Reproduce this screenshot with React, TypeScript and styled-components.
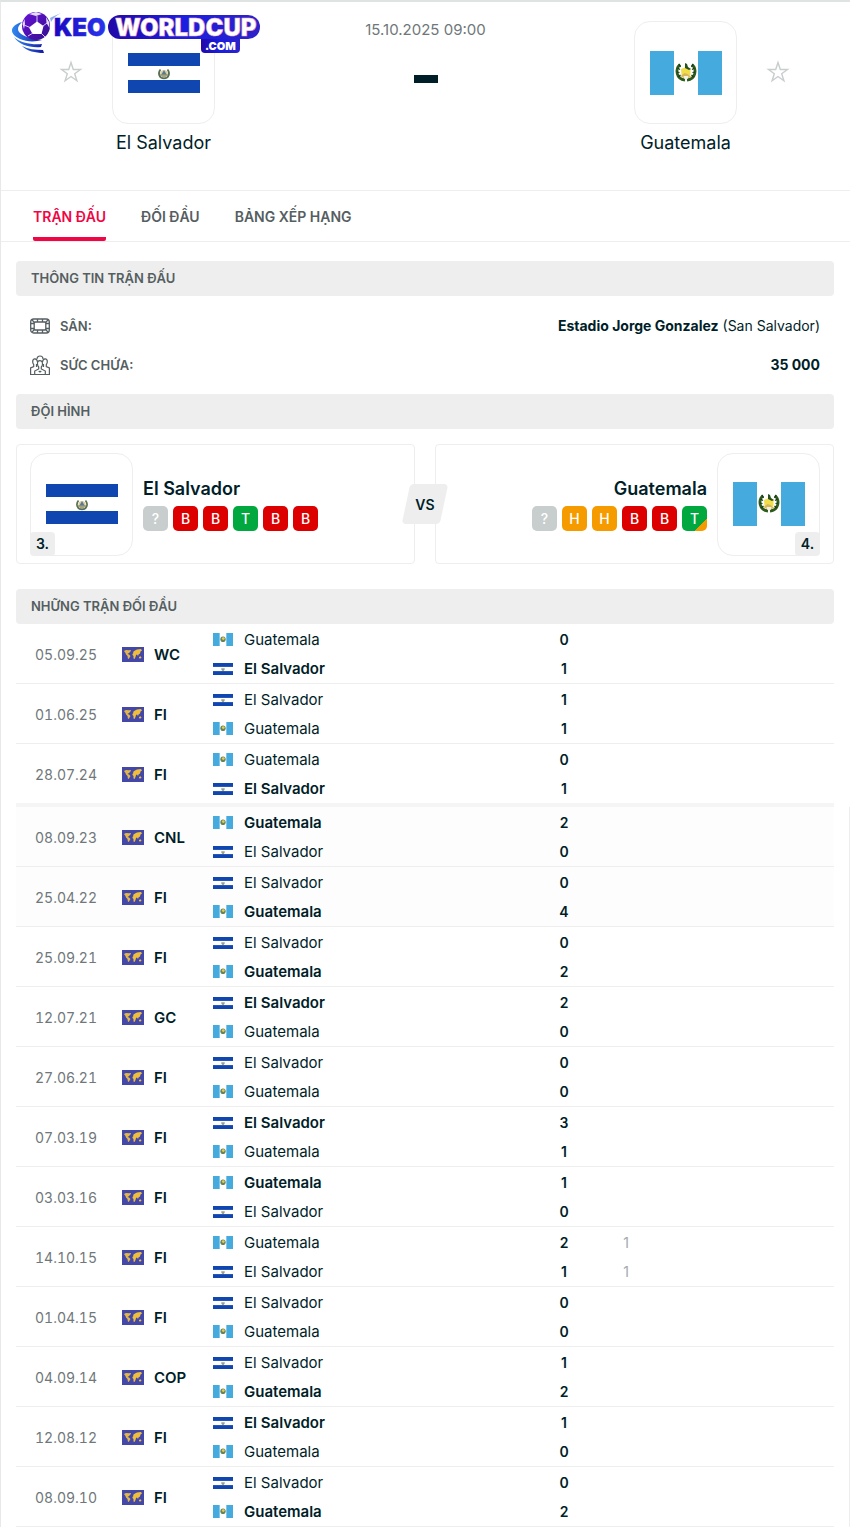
import React from "react";
import styled, { createGlobalStyle, css } from "styled-components";

const GlobalStyle = createGlobalStyle`
  *, *::before, *::after { box-sizing: border-box; }
  body {
    margin: 0;
    background: #fff;
    color: #001e28;
    font-family: Inter, Roboto, sans-serif;
    font-size: 14px;
  }
`;

type Team = "sv" | "gt";

const names: Record<Team, string> = { sv: "El Salvador", gt: "Guatemala" };

const Page = styled.main`
  position: relative;
  border-top: 2px solid #dfe3e1;
  border-left: 1px solid #e8e8e8;
`;

const LogoLink = styled.a`
  position: absolute;
  left: 9px;
  top: 7px;
  z-index: 2;
`;

const Header = styled.header`
  display: grid;
  grid-template-columns: minmax(0, 1fr) auto minmax(0, 1fr);
  height: 189px;
  padding-top: 19px;
  border-bottom: 1px solid #eee;
`;

const Side = styled.div<{ $away?: boolean }>`
  display: flex;
  flex-direction: ${(p) => (p.$away ? "row-reverse" : "row")};
  justify-content: flex-start;
  gap: 19px;
  padding: ${(p) => (p.$away ? "0 50px 0 0" : "0 0 0 48px")};
`;

const StarButton = styled.button`
  align-self: flex-start;
  display: flex;
  width: 44px;
  height: 44px;
  margin-top: 29px;
  padding: 0;
  align-items: center;
  justify-content: center;
  border: 0;
  background: none;
  color: #c8cdcd;
`;

const TeamBlock = styled.div`
  display: flex;
  flex-direction: column;
  align-items: center;
  gap: 8px;
  width: 103px;
`;

const Crest = styled.div`
  position: relative;
  display: flex;
  flex: none;
  width: 103px;
  height: 103px;
  align-items: center;
  justify-content: center;
  border: 1px solid #eee;
  border-radius: 16px;
  background: #fff;
`;

const TeamLink = styled.a`
  color: #001e28;
  font-size: 18px;
  line-height: 22px;
  text-decoration: none;
  white-space: nowrap;
`;

const Kickoff = styled.div`
  display: flex;
  flex-direction: column;
  align-items: center;
  gap: 36px;
  color: #6f777a;
  font-size: 15px;
  line-height: 18px;
`;

const Dash = styled.span`
  width: 24px;
  height: 8px;
  background: #001e28;
`;

const Tabs = styled.nav`
  display: flex;
  gap: 35px;
  height: 51px;
  padding-left: 32px;
  border-bottom: 1px solid #eee;
`;

const Tab = styled.a<{ $active?: boolean }>`
  display: flex;
  align-items: center;
  border-bottom: 4px solid ${(p) => (p.$active ? "#f00545" : "transparent")};
  border-radius: 2px;
  padding-top: 4px;
  color: ${(p) => (p.$active ? "#f00545" : "#555e61")};
  font-size: 14px;
  font-weight: 600;
  text-decoration: none;
`;

const Content = styled.div`
  padding: 19px 0 0 15px;
`;

const Block = styled.section`
  padding-right: 16px;
`;

const SectionTitle = styled.h2`
  height: 35px;
  margin: 0;
  padding: 0 15px;
  border-radius: 4px;
  background: #eee;
  color: #555e61;
  font-size: 13px;
  font-weight: 600;
  line-height: 35px;
`;

const Info = styled.dl`
  margin: 0;
  padding: 10px 14px;
`;

const InfoRow = styled.div`
  display: flex;
  align-items: center;
  justify-content: space-between;
  height: 39px;
`;

const InfoLabel = styled.dt`
  display: flex;
  align-items: center;
  gap: 10px;
  color: #555e61;
  font-size: 13px;
  font-weight: 600;
`;

const InfoValue = styled.dd`
  margin: 0;
`;

const FormCards = styled.div`
  position: relative;
  display: grid;
  grid-template-columns: 1fr 1fr;
  gap: 20px;
  padding: 15px 0 25px;
`;

const FormCard = styled.div<{ $away?: boolean }>`
  display: flex;
  flex-direction: ${(p) => (p.$away ? "row-reverse" : "row")};
  align-items: center;
  gap: 10px;
  height: 120px;
  padding: 0 13px;
  border: 1px solid #eee;
  border-radius: 4px;
`;

const FormInfo = styled.div<{ $away?: boolean }>`
  display: flex;
  flex-direction: column;
  align-items: ${(p) => (p.$away ? "flex-end" : "flex-start")};
  gap: 6px;
`;

const FormName = styled.a`
  color: #001e28;
  font-size: 18px;
  font-weight: 600;
  line-height: 22px;
  text-decoration: none;
`;

const Rank = styled.span<{ $away?: boolean }>`
  position: absolute;
  bottom: -1px;
  ${(p) => (p.$away ? "right: -1px;" : "left: -1px;")}
  width: 25px;
  border-radius: 4px;
  background: #eee;
  font-weight: 600;
  line-height: 24px;
  text-align: center;
`;

const Badges = styled.div`
  display: flex;
  gap: 5px;
`;

type Result = "?" | "B" | "H" | "T";
const resultColors: Record<Result, string> = {
  "?": "#c8cdcd",
  B: "#dc0000",
  H: "#f59b00",
  T: "#00a83f",
};

const Badge = styled.button<{ $result: Result; $corner?: boolean }>`
  width: 25px;
  height: 25px;
  padding: 0;
  border: 0;
  border-radius: 5px;
  background: ${(p) =>
    p.$corner
      ? "linear-gradient(135deg, #00a83f 75%, #f59b00 75%)"
      : resultColors[p.$result]};
  color: #fff;
  font: 500 14px/25px Inter, sans-serif;
`;

const Versus = styled.span`
  position: absolute;
  left: 50%;
  top: 55px;
  display: flex;
  width: 46px;
  height: 40px;
  align-items: center;
  justify-content: center;
  transform: translateX(-50%);
  font-weight: 600;

  &::before {
    content: "";
    position: absolute;
    inset: 0 4px;
    z-index: -1;
    border-radius: 4px;
    background: #eee;
    transform: skewX(-12deg);
  }
`;

const VersusLayer = styled.div`
  position: relative;
  z-index: 0;
`;

const MatchGroup = styled.div<{ $older?: boolean }>`
  ${(p) =>
    p.$older
      ? css`
          padding-right: 15px;
          border-right: 1px solid #eee;
        `
      : css`
          padding-right: 16px;
        `}
`;

const MatchTable = styled.table`
  width: 100%;
  border-collapse: separate;
  border-spacing: 0;
  table-layout: fixed;
  font-size: 15px;
`;

const MatchRow = styled.tr<{ $tinted?: boolean; $last?: boolean }>`
  background: ${(p) => (p.$tinted ? "#fdfdfd" : "#fff")};

  & > td {
    height: ${(p) => (p.$last ? 63 : 60)}px;
    padding: 1px 0 0;
    border-bottom: ${(p) => (p.$last ? 4 : 1)}px solid
      ${(p) => (p.$last ? "#f5f5f5" : "#eee")};
  }
`;

const DateCell = styled.td`
  && {
    padding-left: 19px;
  }
  color: #6f777a;
  font-size: 14px;
  font-variant-numeric: tabular-nums;
`;

const Inline = styled.div`
  display: flex;
  align-items: center;
  gap: 10px;
  font-weight: 600;
`;

const Line = styled.div<{ $winner?: boolean; $center?: boolean; $muted?: boolean }>`
  display: flex;
  align-items: center;
  justify-content: ${(p) => (p.$center ? "center" : "flex-start")};
  gap: 11px;
  height: 29px;
  color: ${(p) => (p.$muted ? "#a3a9ab" : "inherit")};
  font-size: ${(p) => (p.$center ? 14 : 15)}px;
  font-weight: ${(p) => (p.$winner ? 600 : 400)};
`;

function Flag({ team, size }: { team: Team; size: "large" | "small" }) {
  const large = size === "large";
  if (team === "sv") {
    return (
      <svg width={large ? 72 : 20} height={large ? 40 : 12} viewBox="0 0 72 40" preserveAspectRatio="none" aria-hidden="true">
        <rect width="72" height="40" fill="#fff" />
        <rect width="72" height="13" fill="#1046b0" />
        <rect y="27" width="72" height="13" fill="#1046b0" />
        <circle cx="36" cy="20.500" r="3.600" fill="#d9cf98" />
        <path d="M32.500 16.500C29.500 20 31 25.500 36 25.500S42.500 20 39.500 16.500" fill="none" stroke="#587052" strokeWidth="1.700" />
        <path d="M36 17l2.500 4.500h-5z" fill="#59779a" />
        <path d="M32 22h8M33.500 24h5" stroke="#6d745b" strokeWidth="1" />
      </svg>
    );
  }
  return (
    <svg width={large ? 72 : 20} height={large ? 44 : 13} viewBox="0 0 72 44" preserveAspectRatio="none" aria-hidden="true">
      <rect width="72" height="44" fill="#fff" />
      <rect width="24" height="44" fill="#45aadd" />
      <rect x="48" width="24" height="44" fill="#45aadd" />
      {large ? (
        <>
          <path d="M30 13.500C25 18 26 28 35 29M42 13.500C47 18 46 28 37 29" fill="none" stroke="#2f5a1d" strokeWidth="2.800" />
          <path d="M29 13l1.500 3M27.500 17l2.500 1.500M27 21l2.500.5M28.500 26l2-2M43 13l-1.500 3M44.500 17l-2.500 1.500M45 21l-2.500.5M43.500 26l-2-2" stroke="#163c14" strokeWidth="1.200" />
          <path d="M31 18l5-2 4.500 2v6l-4 2-5-2z" fill="#f2dd4b" />
          <path d="M35 12l2 1 1 3 3 2-2 1-4-2z" fill="#27501f" />
          <path d="M30.500 25l4-3 3 1 4 3-3 1-2-2-3 2z" fill="#d6b85a" />
          <path d="M33.500 25h5l-1 3h-3z" fill="#f5f1df" />
        </>
      ) : (
        <>
          <circle cx="36" cy="21" r="9.500" fill="#64855c" />
          <circle cx="37" cy="19" r="5" fill="#e0cb58" />
        </>
      )}
    </svg>
  );
}

function WorldFlag() {
  return (
    <svg width="22" height="15" viewBox="0 0 22 15" aria-hidden="true">
      <rect width="22" height="15" fill="#4348a8" />
      <path d="M2 4l2-1 3 .3L9 3l-.5 1.500L7 6 5.500 7l1.500.5L8.500 9 7 11.500 6 12 5.500 9 4 7.500 3.500 6z" fill="#e3b646" />
      <path d="M10.500 7l1-1-.5-1L13 3.500l2-1L19 2l1 1.500-1.500 1-.5 2-1.500 1-.5 1.500-1-1.500-1 .5-.5 2-1 2-1-.5V9l-1-1zM17 10l1.500-.8 1 1.300-1 1-1.500-.3z" fill="#efbf3c" />
    </svg>
  );
}

function StarIcon() {
  return (
    <svg width="24" height="24" viewBox="0 0 24 24" fill="none" stroke="currentColor" strokeWidth="1.400" aria-hidden="true">
      <path d="M12 2.500l2.300 7h7.200l-5.800 4.300 2.200 7-5.900-4.300-5.900 4.300 2.200-7-5.800-4.300h7.200z" />
    </svg>
  );
}

function StadiumIcon() {
  return (
    <svg width="20" height="20" viewBox="0 0 20 20" fill="none" stroke="#555e61" strokeWidth="1.300" aria-hidden="true">
      <rect x=".7" y="3" width="18.600" height="14" rx="3" />
      <rect x="4.200" y="6" width="11.600" height="8" rx="1" />
      <path d="M7.500 3v3M12.500 3v3M7.500 14v3M12.500 14v3M1 7.500h3M19 7.500h-3M1 12.500h3M19 12.500h-3M2 4l3 3M18 4l-3 3M2 16l3-3M18 16l-3-3" />
    </svg>
  );
}

function CrowdIcon() {
  return (
    <svg width="20" height="20" viewBox="0 0 20 20" fill="none" stroke="#555e61" strokeWidth="1.200" aria-hidden="true">
      <path d="M7 4c0-4 6-4 6 0M7.500 9C7 4.500 12.500 4.500 12.500 9c0 1.500-.7 2.500-1.200 3v2l4 2v3.500H4.700V16l4-2v-2c-.6-.6-1.200-1.500-1.200-3z" />
      <path d="M7.500 7C7 2.500 2.500 3 2.700 7c.1 1.500.8 2 1 2.500v2L.6 13v6.500h4.100M12.500 7c.5-4.500 5-4 4.800 0-.1 1.500-.8 2-1 2.500v2l3.100 1.500v6.500h-4.100M6.500 9v3M13.500 9v3M8.700 16l1.300 1 1.300-1" />
    </svg>
  );
}

function Logo() {
  return (
    <svg width="254" height="48" viewBox="0 0 254 48" aria-label="KEO WORLDCUP.COM">
      <defs>
        <linearGradient id="brand" x1="0" x2="1">
          <stop offset="0" stopColor="#2208a8" />
          <stop offset=".5" stopColor="#1b1ee0" />
          <stop offset="1" stopColor="#2c22c8" />
        </linearGradient>
        <linearGradient id="word" x1="0" x2="1">
          <stop offset="0" stopColor="#1c06c0" />
          <stop offset="1" stopColor="#2a35ee" />
        </linearGradient>
        <linearGradient id="swoosh" x1="0" x2="1">
          <stop offset="0" stopColor="#2f8bf0" />
          <stop offset="1" stopColor="#1519a3" />
        </linearGradient>
        <linearGradient id="ball" x1="0" y1="0" x2="1" y2="1">
          <stop offset="0" stopColor="#6a10d8" />
          <stop offset="1" stopColor="#32108c" />
        </linearGradient>
      </defs>
      <path d="M12 13C-1 17-1 25 10 30c7 3 15 3 22 1-8-1-19-3-23-8-2-3-1-6 3-10z" fill="url(#swoosh)" />
      <path d="M4 28c6 6 18 8 28 7l-1 3C20 39 9 36 4 28zM12 37c6 3 13 4 21 4l1 3c-9 0-17-2-22-7z" fill="url(#swoosh)" />
      <path d="M40 9c4-2 8-4 11-5-4 2-8 5-10 9z" fill="#8fb0e8" />
      <circle cx="26" cy="17" r="14" fill="url(#ball)" />
      <path d="M19 5l7-2 6 2-6 2zM36 8l3 5 .5 6-3-5zM12.500 15l2-5 .5 5-1 5z" fill="#e4dcff" />
      <path d="M27 12.500l6.500 4.500-2 8h-9L19 18.500z" fill="#fff" />
      <path d="M27 13V7M33 17l4-3M31 24l4 4M23 24l-5 3M20 18.500l-6-2.500" stroke="#d8c8ff" strokeWidth="1" />
      <text x="44" y="27" fill="url(#word)" stroke="url(#word)" strokeWidth=".5" fontFamily="Inter, sans-serif" fontWeight="900" fontSize="24">KEO</text>
      <rect x="98" y="6" width="152" height="24" rx="12" fill="url(#brand)" />
      <path d="M191 30h39v10a4 4 0 0 1-4 4h-31a4 4 0 0 1-4-4z" fill="url(#brand)" />
      <text x="105" y="27" fill="#fff" stroke="#f2a5b5" strokeWidth=".5" fontFamily="Inter, sans-serif" fontWeight="900" fontSize="24">WORLDCUP</text>
      <text x="195" y="41" fill="#fff" fontFamily="Inter, sans-serif" fontWeight="900" fontSize="11">.COM</text>
    </svg>
  );
}

interface Match {
  date: string;
  code: string;
  home: Team;
  score: [number, number];
  regular?: [number, number];
  tinted?: boolean;
}

const recent: Match[] = [
  { date: "05.09.25", code: "WC", home: "gt", score: [0, 1] },
  { date: "01.06.25", code: "FI", home: "sv", score: [1, 1] },
  { date: "28.07.24", code: "FI", home: "gt", score: [0, 1] },
];

const older: Match[] = [
  { date: "08.09.23", code: "CNL", home: "gt", score: [2, 0], tinted: true },
  { date: "25.04.22", code: "FI", home: "sv", score: [0, 4], tinted: true },
  { date: "25.09.21", code: "FI", home: "sv", score: [0, 2] },
  { date: "12.07.21", code: "GC", home: "sv", score: [2, 0] },
  { date: "27.06.21", code: "FI", home: "sv", score: [0, 0] },
  { date: "07.03.19", code: "FI", home: "sv", score: [3, 1] },
  { date: "03.03.16", code: "FI", home: "gt", score: [1, 0] },
  { date: "14.10.15", code: "FI", home: "gt", score: [2, 1], regular: [1, 1] },
  { date: "01.04.15", code: "FI", home: "sv", score: [0, 0] },
  { date: "04.09.14", code: "COP", home: "sv", score: [1, 2] },
  { date: "12.08.12", code: "FI", home: "sv", score: [1, 0] },
  { date: "08.09.10", code: "FI", home: "sv", score: [0, 2] },
];

function Matches({ rows, divider }: { rows: Match[]; divider?: boolean }) {
  return (
    <MatchTable>
      <colgroup>
        <col width="106" />
        <col width="91" />
        <col />
        <col width="62" />
        <col width="62" />
        <col width="177" />
      </colgroup>
      <tbody>
        {rows.map((m, i) => {
          const teams: Team[] = m.home === "sv" ? ["sv", "gt"] : ["gt", "sv"];
          return (
            <MatchRow key={m.date} $tinted={m.tinted} $last={divider && i === rows.length - 1}>
              <DateCell>{m.date}</DateCell>
              <td>
                <Inline>
                  <WorldFlag />
                  {m.code}
                </Inline>
              </td>
              <td>
                {teams.map((t, n) => (
                  <Line key={t} $winner={!m.regular && m.score[n] > m.score[1 - n]}>
                    <Flag team={t} size="small" />
                    {names[t]}
                  </Line>
                ))}
              </td>
              <td>
                {m.score.map((s, n) => (
                  <Line key={n} $center $winner>{s}</Line>
                ))}
              </td>
              <td>
                {m.regular?.map((s, n) => (
                  <Line key={n} $center $muted>{s}</Line>
                ))}
              </td>
              <td />
            </MatchRow>
          );
        })}
      </tbody>
    </MatchTable>
  );
}

function HeaderTeam({ team, away }: { team: Team; away?: boolean }) {
  return (
    <Side $away={away}>
      <StarButton aria-label={`Follow ${names[team]}`}>
        <StarIcon />
      </StarButton>
      <TeamBlock>
        <Crest>
          <Flag team={team} size="large" />
        </Crest>
        <TeamLink href="#">{names[team]}</TeamLink>
      </TeamBlock>
    </Side>
  );
}

function TeamForm({ team, rank, results, away }: { team: Team; rank: string; results: Result[]; away?: boolean }) {
  return (
    <FormCard $away={away}>
      <Crest>
        <Flag team={team} size="large" />
        <Rank $away={away}>{rank}</Rank>
      </Crest>
      <FormInfo $away={away}>
        <FormName href="#">{names[team]}</FormName>
        <Badges>
          {results.map((r, i) => (
            <Badge key={i} $result={r} $corner={away && r === "T"}>{r}</Badge>
          ))}
        </Badges>
      </FormInfo>
    </FormCard>
  );
}

export default function App() {
  return (
    <Page>
      <GlobalStyle />
      <LogoLink href="#">
        <Logo />
      </LogoLink>
      <Header>
        <HeaderTeam team="sv" />
        <Kickoff>
          <time>15.10.2025 09:00</time>
          <Dash />
        </Kickoff>
        <HeaderTeam team="gt" away />
      </Header>
      <Tabs>
        <Tab href="#" $active>TRẬN ĐẤU</Tab>
        <Tab href="#">ĐỐI ĐẦU</Tab>
        <Tab href="#">BẢNG XẾP HẠNG</Tab>
      </Tabs>
      <Content>
        <Block>
          <SectionTitle>THÔNG TIN TRẬN ĐẤU</SectionTitle>
          <Info>
            <InfoRow>
              <InfoLabel><StadiumIcon />SÂN:</InfoLabel>
              <InfoValue><b>Estadio Jorge Gonzalez</b> (San Salvador)</InfoValue>
            </InfoRow>
            <InfoRow>
              <InfoLabel><CrowdIcon />SỨC CHỨA:</InfoLabel>
              <InfoValue><b>35 000</b></InfoValue>
            </InfoRow>
          </Info>
        </Block>
        <Block>
          <SectionTitle>ĐỘI HÌNH</SectionTitle>
          <VersusLayer>
            <FormCards>
              <TeamForm team="sv" rank="3." results={["?", "B", "B", "T", "B", "B"]} />
              <TeamForm team="gt" rank="4." results={["?", "H", "H", "B", "B", "T"]} away />
              <Versus>VS</Versus>
            </FormCards>
          </VersusLayer>
        </Block>
        <Block>
          <SectionTitle>NHỮNG TRẬN ĐỐI ĐẦU</SectionTitle>
        </Block>
        <MatchGroup>
          <Matches rows={recent} divider />
        </MatchGroup>
        <MatchGroup $older>
          <Matches rows={older} />
        </MatchGroup>
      </Content>
    </Page>
  );
}
